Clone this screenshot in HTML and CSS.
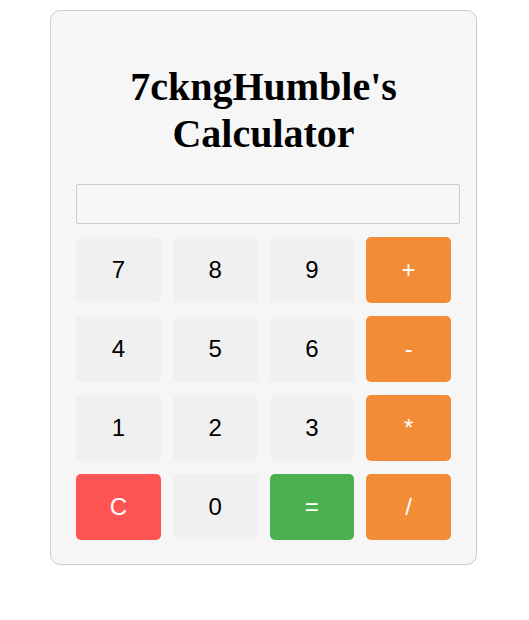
FILE: index.html
```html
<!DOCTYPE html>
<html>
<head>
<meta charset="utf-8">
<title>Calculator</title>
<link rel="stylesheet" href="styles.css">
</head>
<body>
<div class="calculator">
  <h1 class="title">7ckngHumble's Calculator</h1>
  <input class="display" type="text" readonly>
  <div class="keys">
    <button class="key">7</button>
    <button class="key">8</button>
    <button class="key">9</button>
    <button class="key op">+</button>
    <button class="key">4</button>
    <button class="key">5</button>
    <button class="key">6</button>
    <button class="key op">-</button>
    <button class="key">1</button>
    <button class="key">2</button>
    <button class="key">3</button>
    <button class="key op">*</button>
    <button class="key clear">C</button>
    <button class="key">0</button>
    <button class="key equals">=</button>
    <button class="key op">/</button>
  </div>
</div>
</body>
</html>
```
FILE: styles.css
```css
body {
  margin: 0;
  padding: 0 2px 0 0;
  background: #ffffff;
  font-family: "Liberation Sans", Arial, sans-serif;
}

.calculator {
  width: 375px;
  margin: 10px auto 0;
  padding: 25px 25px 24px;
  background: #f6f6f6;
  border: 1px solid #cccccc;
  border-radius: 10px;
  display: flex;
  flex-direction: column;
  align-items: flex-start;
}

.title {
  align-self: stretch;
  font-family: "Liberation Serif", "Times New Roman", serif;
  font-size: 40px;
  font-weight: bold;
  text-align: center;
  margin: 27px 0 27px;
  line-height: 47px;
  color: #000;
}

.display {
  box-sizing: border-box;
  width: 384px;
  height: 40px;
  margin: 0 0 13px;
  padding: 10px;
  font-size: 20px;
  background: #f6f6f6;
  border: 1px solid #cccccc;
  border-radius: 2px;
}

.keys {
  align-self: stretch;
  display: grid;
  grid-template-columns: repeat(4, 1fr);
  column-gap: 12px;
  row-gap: 13px;
}

.key {
  height: 66px;
  border: none;
  border-radius: 5px;
  background: #f0f0f0;
  color: #000;
  font-family: "Liberation Sans", Arial, sans-serif;
  font-size: 24px;
  padding: 0;
}

.key.op {
  background: #f28c36;
  color: #fff;
}

.key.clear {
  background: #ff5454;
  color: #fff;
}

.key.equals {
  background: #4caf50;
  color: #fff;
}
```
